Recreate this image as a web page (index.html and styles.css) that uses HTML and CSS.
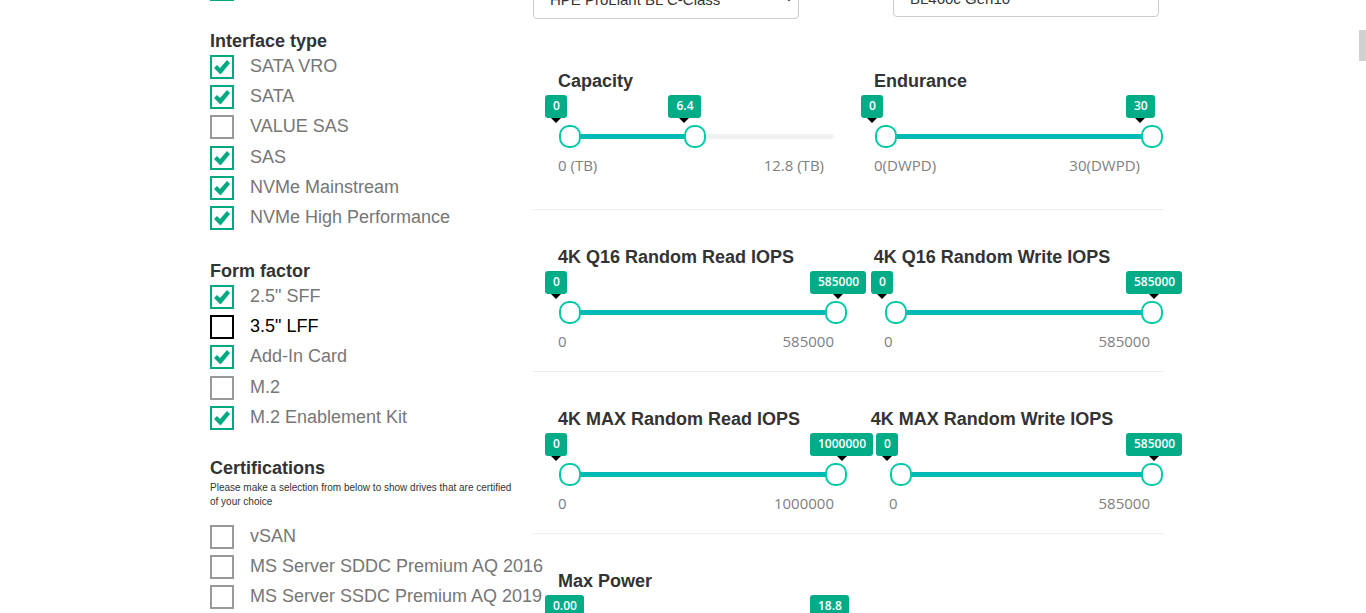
FILE: index.html
```html
<!DOCTYPE html>
<html lang="en">
<head>
<meta charset="utf-8">
<title>Drive selector</title>
<link rel="stylesheet" href="styles.css">
</head>
<body>
<div class="page">
  <aside class="filters">
    <fieldset class="group">
      <div class="options">
        <div class="option"><input type="checkbox" aria-label="Drive type" checked></div>
      </div>
    </fieldset>
    <fieldset class="group">
      <legend class="heading">Interface type</legend>
      <div class="options">
        <label class="option"><input type="checkbox" checked><span>SATA VRO</span></label>
        <label class="option"><input type="checkbox" checked><span>SATA</span></label>
        <label class="option"><input type="checkbox"><span>VALUE SAS</span></label>
        <label class="option"><input type="checkbox" checked><span>SAS</span></label>
        <label class="option"><input type="checkbox" checked><span>NVMe Mainstream</span></label>
        <label class="option"><input type="checkbox" checked><span>NVMe High Performance</span></label>
      </div>
    </fieldset>
    <fieldset class="group">
      <legend class="heading">Form factor</legend>
      <div class="options">
        <label class="option"><input type="checkbox" checked><span>2.5" SFF</span></label>
        <label class="option option-active"><input type="checkbox"><span>3.5" LFF</span></label>
        <label class="option"><input type="checkbox" checked><span>Add-In Card</span></label>
        <label class="option"><input type="checkbox"><span>M.2</span></label>
        <label class="option"><input type="checkbox" checked><span>M.2 Enablement Kit</span></label>
      </div>
    </fieldset>
    <fieldset class="group">
      <legend class="heading">Certifications</legend>
      <p class="note">Please make a selection from below to show drives that are certified of your choice</p>
      <div class="options">
        <label class="option"><input type="checkbox"><span>vSAN</span></label>
        <label class="option"><input type="checkbox"><span>MS Server SDDC Premium AQ 2016</span></label>
        <label class="option"><input type="checkbox"><span>MS Server SSDC Premium AQ 2019</span></label>
      </div>
    </fieldset>
  </aside>

  <main class="content">
    <div class="fields">
      <div class="field">
        <select aria-label="Server family"><option>HPE ProLiant BL C-Class</option></select>
        <svg class="chevron" viewBox="0 0 10 6" aria-hidden="true"><path d="M1 1l4 4 4-4"/></svg>
      </div>
      <div class="field field-model">
        <select aria-label="Server model"><option>BL460c Gen10</option></select>
        <svg class="chevron" viewBox="0 0 10 6" aria-hidden="true"><path d="M1 1l4 4 4-4"/></svg>
      </div>
    </div>

    <section class="row row-first">
      <div class="metric">
        <h2 class="heading">Capacity</h2>
        <div class="slider" style="--from:0;--to:0.468">
          <div class="track"></div><div class="fill"></div>
          <input type="range" min="0" max="12.8" step="0.1" value="0" aria-label="Capacity minimum">
          <input type="range" min="0" max="12.8" step="0.1" value="6" aria-label="Capacity maximum" aria-valuetext="6.4">
          <output class="bubble bubble-from">0</output><output class="bubble bubble-to">6.4</output>
        </div>
        <div class="limits limits-unit"><span>0 (TB)</span><span>12.8 (TB)</span></div>
      </div>
      <div class="metric">
        <h2 class="heading">Endurance</h2>
        <div class="slider" style="--from:0;--to:1">
          <div class="track"></div><div class="fill"></div>
          <input type="range" min="0" max="30" value="0" aria-label="Endurance minimum">
          <input type="range" min="0" max="30" value="30" aria-label="Endurance maximum">
          <output class="bubble bubble-from">0</output><output class="bubble bubble-to">30</output>
        </div>
        <div class="limits limits-unit"><span>0(DWPD)</span><span>30(DWPD)</span></div>
      </div>
    </section>

    <section class="row">
      <div class="metric">
        <h2 class="heading">4K Q16 Random Read IOPS</h2>
        <div class="slider" style="--from:0;--to:1">
          <div class="track"></div><div class="fill"></div>
          <input type="range" min="0" max="585000" value="0" aria-label="4K Q16 read minimum">
          <input type="range" min="0" max="585000" value="585000" aria-label="4K Q16 read maximum">
          <output class="bubble bubble-from">0</output><output class="bubble bubble-to">585000</output>
        </div>
        <div class="limits"><span>0</span><span>585000</span></div>
      </div>
      <div class="metric">
        <h2 class="heading heading-write">4K Q16 Random Write IOPS</h2>
        <div class="inset">
          <div class="slider" style="--from:0;--to:1">
            <div class="track"></div><div class="fill"></div>
            <input type="range" min="0" max="585000" value="0" aria-label="4K Q16 write minimum">
            <input type="range" min="0" max="585000" value="585000" aria-label="4K Q16 write maximum">
            <output class="bubble bubble-from">0</output><output class="bubble bubble-to">585000</output>
          </div>
          <div class="limits"><span>0</span><span>585000</span></div>
        </div>
      </div>
    </section>

    <section class="row">
      <div class="metric">
        <h2 class="heading">4K MAX Random Read IOPS</h2>
        <div class="slider" style="--from:0;--to:1">
          <div class="track"></div><div class="fill"></div>
          <input type="range" min="0" max="1000000" value="0" aria-label="4K MAX read minimum">
          <input type="range" min="0" max="1000000" value="1000000" aria-label="4K MAX read maximum">
          <output class="bubble bubble-from">0</output><output class="bubble bubble-to">1000000</output>
        </div>
        <div class="limits"><span>0</span><span>1000000</span></div>
      </div>
      <div class="metric">
        <h2 class="heading heading-write">4K MAX Random Write IOPS</h2>
        <div class="inset inset-wide">
          <div class="slider" style="--from:0;--to:1">
            <div class="track"></div><div class="fill"></div>
            <input type="range" min="0" max="585000" value="0" aria-label="4K MAX write minimum">
            <input type="range" min="0" max="585000" value="585000" aria-label="4K MAX write maximum">
            <output class="bubble bubble-from">0</output><output class="bubble bubble-to">585000</output>
          </div>
          <div class="limits"><span>0</span><span>585000</span></div>
        </div>
      </div>
    </section>

    <section class="row">
      <div class="metric">
        <h2 class="heading">Max Power</h2>
        <div class="slider" style="--from:0;--to:1">
          <div class="track"></div><div class="fill"></div>
          <input type="range" min="0" max="18.8" step="0.1" value="0" aria-label="Max power minimum">
          <input type="range" min="0" max="18.8" step="0.1" value="18.8" aria-label="Max power maximum">
          <output class="bubble bubble-from">0.00</output><output class="bubble bubble-to">18.8</output>
        </div>
      </div>
    </section>
  </main>
</div>
<div class="scroll-thumb"></div>
</body>
</html>
```
FILE: styles.css
```css
* {
  box-sizing: border-box;
}

body {
  margin: 0;
  height: 100vh;
  overflow: hidden;
  position: relative;
  display: flex;
  justify-content: center;
  align-items: flex-start;
  background: #fff;
  color: #333;
  font-family: "Liberation Sans", Arial, sans-serif;
}

/* The page is scrolled past its top section */
.page {
  display: flex;
  width: 100%;
  max-width: 962px;
  margin-top: -26px;
  padding-left: 8px;
}

.filters {
  flex: 0 0 323px;
  min-width: 0;
}

.group {
  margin: 0 0 27px;
  padding: 0;
  border: 0;
  min-width: 0;
}

.group:last-child {
  margin-top: -2px;
}

.heading {
  margin: 0;
  padding: 0;
  font-size: 18px;
  line-height: 20px;
  font-weight: 700;
  color: #333;
  white-space: nowrap;
}

legend.heading {
  margin-bottom: 1px;
}

.note {
  margin: 2px 0 13px;
  max-width: 310px;
  font-size: 10px;
  line-height: 14px;
}

.option {
  display: flex;
  align-items: flex-start;
  gap: 16px;
  height: 30px;
  padding-top: 3px;
  font-size: 18px;
  line-height: 22px;
  color: #767676;
  white-space: nowrap;
}

.option:nth-child(3n) {
  height: 31px;
}

.option input {
  appearance: none;
  flex: none;
  width: 24px;
  height: 24px;
  margin: 0;
  border: 2px solid #999;
  background: #fff;
}

.option input:checked {
  border-color: #01a982;
}

.option input:checked::before {
  content: "";
  display: block;
  width: 20px;
  height: 20px;
  background: #01a982;
  clip-path: polygon(2px 11px, 5px 8px, 8px 11px, 15px 3px, 18px 6px, 9px 17px, 8px 17px);
}

.option-active {
  color: #000;
}

.option-active input {
  border-color: #000;
}

.content {
  flex: 1;
  min-width: 0;
  padding-top: 5px;
}

.fields {
  display: flex;
  gap: 94px;
  align-items: flex-start;
  padding-bottom: 15px;
}

.field {
  position: relative;
  flex: 0 1 266px;
  height: 40px;
}

.field-model {
  height: 38px;
}

.field select {
  appearance: none;
  width: 100%;
  height: 100%;
  padding: 0 16px;
  border: 1px solid #ccc;
  border-radius: 4px;
  background: #fff;
  color: #333;
  font: 15px "Liberation Sans", Arial, sans-serif;
}

.chevron {
  position: absolute;
  right: 5px;
  top: 16px;
  width: 10px;
  height: 6px;
  fill: none;
  stroke: #333;
  stroke-width: 2;
}

.field-model .chevron {
  top: 14px;
}

.row {
  display: flex;
  gap: 40px;
  padding: 37px 14px 20px 25px;
  border-bottom: 1px solid #eee;
}

.row-first {
  padding-bottom: 34px;
}

.metric {
  flex: 0 1 276px;
  min-width: 0;
}

.heading-write {
  display: flex;
  justify-content: center;
  width: 236px;
}

.inset {
  padding-left: 10px;
}

.inset-wide {
  padding-left: 15px;
}

.slider {
  position: relative;
  height: 23px;
  margin: 34px -13px 7px 1px;
}

.track,
.fill {
  position: absolute;
  top: 9px;
  height: 5px;
  border-radius: 3px;
}

.track {
  left: 0;
  right: 13px;
  background: #f1f1f1;
}

.fill {
  left: calc((100% - 22px) * var(--from) + 11px);
  width: calc((100% - 22px) * (var(--to) - var(--from)));
  background: #00bbb4;
}

.slider input {
  appearance: none;
  position: absolute;
  inset: 0;
  width: 100%;
  height: 23px;
  margin: 0;
  background: transparent;
  pointer-events: none;
}

.slider input::-webkit-slider-thumb {
  appearance: none;
  width: 22px;
  height: 23px;
  border: 2px solid #01c9a8;
  border-radius: 10px;
  background: #fff;
  pointer-events: auto;
}

.bubble {
  position: absolute;
  top: -30px;
  height: 23px;
  padding: 0 7px 0 8px;
  border-radius: 3px;
  background: #01ac87;
  color: #fff;
  font: 600 12px/22px "Open Sans", "Noto Sans", sans-serif;
}

.bubble-from {
  left: calc((100% - 22px) * var(--from) - 14px);
}

.bubble-to {
  left: calc((100% - 22px) * var(--to) - 15px);
}

.bubble::after {
  content: "";
  position: absolute;
  top: 100%;
  left: calc(50% - 5px);
  border: 5px solid transparent;
  border-top-color: #000;
  border-bottom: 0;
}

.limits {
  display: flex;
  justify-content: space-between;
  font: 400 15px/20px "Open Sans", "Noto Sans", sans-serif;
  color: #808080;
}

.limits-unit {
  padding-right: 10px;
}

.scroll-thumb {
  position: absolute;
  right: 0;
  top: 30px;
  width: 7px;
  height: 31px;
  background: #d1d1d1;
}
```
